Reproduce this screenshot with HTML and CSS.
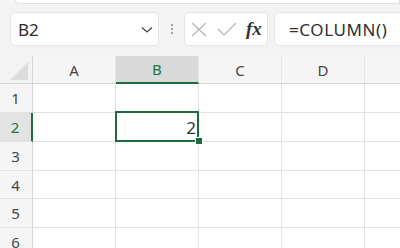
FILE: index.html
```html
<!DOCTYPE html>
<html>
<head>
<meta charset="utf-8">
<link rel="stylesheet" href="styles.css">
</head>
<body>
<div class="ribbon-edge"></div>
<div class="formula-bar">
  <div class="namebox">
    <span class="name">B2</span>
    <svg class="chev" width="12" height="8" viewBox="0 0 12 8"><path d="M1 1.5 L6 6 L11 1.5" fill="none" stroke="#444" stroke-width="1.3"/></svg>
  </div>
  <div class="dots"><span></span><span></span><span></span></div>
  <div class="fxbox">
    <svg width="16" height="15" viewBox="0 0 16 15"><path d="M1 1 L15 14 M15 1 L1 14" stroke="#b4b4b4" stroke-width="1.2" fill="none"/></svg>
    <svg width="20" height="14" viewBox="0 0 20 14"><path d="M1 7 L7 13 L19 1" stroke="#b4b4b4" stroke-width="1.2" fill="none"/></svg>
    <span class="fx">fx</span>
  </div>
  <div class="formula">=COLUMN()</div>
</div>
<div class="sheet">
  <div class="corner"><svg width="20" height="20" viewBox="0 0 20 20"><path d="M18 2 L18 20 L0 20 Z" fill="#dcdcdc"/></svg></div>
  <div class="colhead">A</div>
  <div class="colhead active">B</div>
  <div class="colhead">C</div>
  <div class="colhead">D</div>
  <div class="colhead"></div>

  <div class="rowhead">1</div>
  <div class="cell"></div><div class="cell"></div><div class="cell"></div><div class="cell"></div><div class="cell"></div>

  <div class="rowhead active">2</div>
  <div class="cell"></div>
  <div class="cell selected">2<div class="sel-frame"></div><div class="handle"></div></div>
  <div class="cell"></div><div class="cell"></div><div class="cell"></div>

  <div class="rowhead">3</div>
  <div class="cell"></div><div class="cell"></div><div class="cell"></div><div class="cell"></div><div class="cell"></div>

  <div class="rowhead">4</div>
  <div class="cell"></div><div class="cell"></div><div class="cell"></div><div class="cell"></div><div class="cell"></div>

  <div class="rowhead">5</div>
  <div class="cell"></div><div class="cell"></div><div class="cell"></div><div class="cell"></div><div class="cell"></div>

  <div class="rowhead">6</div>
  <div class="cell"></div><div class="cell"></div><div class="cell"></div><div class="cell"></div><div class="cell"></div>
</div>
</body>
</html>
```
FILE: styles.css
```css
* { box-sizing: border-box; }
html, body { margin: 0; padding: 0; }
body {
  width: 400px;
  height: 248px;
  overflow: hidden;
  background: #f3f3f3;
  font-family: "Noto Sans", "Open Sans", sans-serif;
  color: #333;
}
.ribbon-edge {
  height: 4px;
  margin-left: 15px;
  background: #fff;
  border: 1px solid #e2e2e2;
  border-top: none;
  border-bottom-left-radius: 4px;
}
.formula-bar {
  display: flex;
  align-items: center;
  height: 34px;
  margin-top: 8px;
  padding-left: 10px;
  width: 420px;
}
.namebox {
  width: 149px;
  height: 34px;
  background: #fff;
  border: 1px solid #e4e4e4;
  border-radius: 5px;
  display: flex;
  align-items: center;
  justify-content: space-between;
  padding: 0 5px 0 7px;
}
.name { font-size: 17px; color: #2b2b2b; }
.chev { margin-top: 1px; }
.dots {
  width: 25px;
  display: flex;
  flex-direction: column;
  align-items: center;
  gap: 2px;
}
.dots span {
  width: 2px;
  height: 2px;
  background: #888;
  border-radius: 1px;
}
.fxbox {
  width: 84px;
  height: 34px;
  background: #fff;
  border: 1px solid #e4e4e4;
  border-radius: 5px;
  display: flex;
  align-items: center;
  padding-left: 6px;
  gap: 10px;
}
.fx {
  font-family: "Liberation Serif", serif;
  font-style: italic;
  font-weight: bold;
  font-size: 19px;
  color: #333;
  margin-left: -1px;
}
.formula {
  margin-left: 6px;
  flex: 1;
  height: 34px;
  background: #fff;
  border: 1px solid #e4e4e4;
  border-radius: 5px;
  display: flex;
  align-items: center;
  padding-left: 14px;
  font-size: 17px;
  letter-spacing: 0.6px;
  color: #2f2f2f;
}
.sheet {
  margin-top: 10px;
  display: grid;
  grid-template-columns: 33px 83px 83px 83px 83px 40px;
  grid-template-rows: 28px 29px 29px 29px 28px 29px 29px;
}
.corner {
  background: #f3f3f3;
  border-right: 1px solid #d6d6d6;
  border-bottom: 1px solid #d6d6d6;
  display: flex;
  align-items: flex-end;
  justify-content: flex-end;
  padding: 0 2px 3px 0;
}
.colhead {
  background: #f5f5f5;
  border-bottom: 1px solid #d6d6d6;
  border-right: 1px solid #e6e6e6;
  display: flex;
  align-items: center;
  justify-content: center;
  font-size: 15px;
  color: #444;
}
.colhead.active {
  background: #d9d9d9;
  color: #217346;
  border-bottom: 2px solid #1d6b3e;
}
.rowhead {
  background: #f5f5f5;
  border-right: 1px solid #d6d6d6;
  border-bottom: 1px solid #e3e3e3;
  display: flex;
  align-items: center;
  justify-content: center;
  font-size: 15px;
  color: #444;
  padding-right: 1px;
}
.rowhead.active {
  background: #e3e3e3;
  color: #217346;
  border-right: 2px solid #1d6b3e;
}
.cell {
  background: #fff;
  border-right: 1px solid #e1e1e1;
  border-bottom: 1px solid #e1e1e1;
}
.cell.selected {
  position: relative;
  display: flex;
  align-items: center;
  justify-content: flex-end;
  padding-right: 2px;
  font-size: 17px;
  color: #333;
}
.sel-frame {
  position: absolute;
  left: -1px;
  top: -2px;
  width: 84px;
  height: 31px;
  border: 2px solid #1d6b3e;
}
.handle {
  position: absolute;
  left: 79px;
  top: 24px;
  width: 8px;
  height: 8px;
  background: #1d6b3e;
  border: 1px solid #fff;
}
```
